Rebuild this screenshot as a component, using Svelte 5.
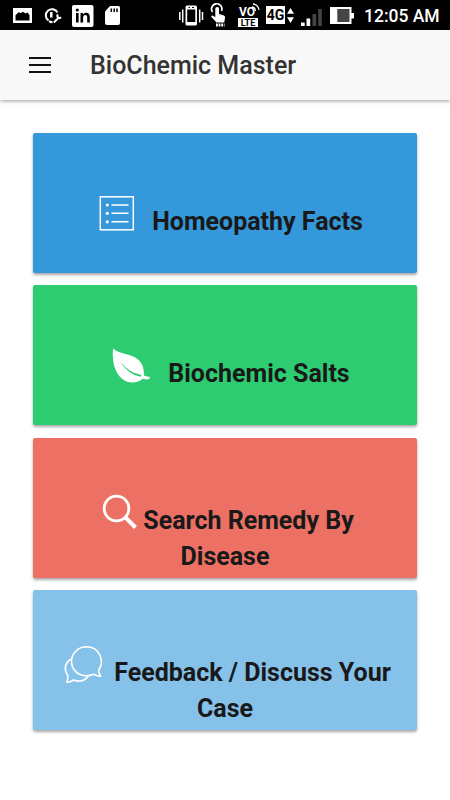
<script lang="ts">
    interface Card {
        icon: string;
        color: string;
        iconWidth: number;
        lines: string[];
    }

    const cards: Card[] = [
        { icon: 'list', color: 'blue', iconWidth: 63, lines: ['Homeopathy Facts'] },
        { icon: 'leaf', color: 'green', iconWidth: 66, lines: ['Biochemic Salts'] },
        { icon: 'search', color: 'red', iconWidth: 45, lines: ['Search Remedy By', 'Disease'] },
        { icon: 'chat', color: 'sky', iconWidth: 53, lines: ['Feedback / Discuss Your', 'Case'] }
    ];
</script>

<div class="status-bar">
    <svg class="photo" width="20" height="30" viewBox="0 0 20 30">
        <path fill="#fff" fill-rule="evenodd" d="M0 8h19v15H0zM2.500 20.500h14V15l-2-2.500-2 1-2.500-1.700-2 1.200-2.500-.8-3 3z" />
    </svg>
    <svg class="tool" width="18" height="30" viewBox="0 0 18 30">
        <path d="M4.500 20.500A6.200 6.200 0 1 1 13.500 12.500M5 21.200q1.500 1 3.500 1" fill="none" stroke="#fff" stroke-width="2" />
        <path d="M7.300 12v5.500" stroke="#fff" stroke-width="2.500" />
        <path d="M9.800 22.500l4-4M14 14.500a2 2 0 1 0 3 2.800" fill="none" stroke="#fff" stroke-width="2" />
    </svg>
    <svg class="linkedin" width="22" height="30" viewBox="0 0 22 30">
        <rect y="5" width="21.500" height="22" rx="2" fill="#fff" />
        <path fill="#000" d="M4 13h2.600v9.500H4zM8.500 13H11v1.300c.8-1.100 1.900-1.600 3.200-1.600 2.600 0 3.600 1.600 3.600 4.300v5.500h-2.600v-5c0-1.600-.4-2.600-1.800-2.600-1.600 0-2.300 1.100-2.300 2.800v4.800H8.500z" />
        <circle cx="5.300" cy="10" r="1.600" fill="#000" />
    </svg>
    <svg class="sd" width="16" height="30" viewBox="0 0 16 30">
        <path fill="#fff" d="M5 6h8.500q1.500 0 1.500 1.500v15.500q0 2-2 2H2q-2 0-2-2V11.500z" />
        <path stroke="#000" stroke-width="1.500" d="M6.300 8.500V12M9.200 8.500V12M12 8.500V12" />
    </svg>
    <span class="spacer"></span>
    <svg class="vibrate" width="25" height="30" viewBox="0 0 25 30">
        <path fill="#fff" fill-rule="evenodd" d="M8 5.500h8.500q1.500 0 1.500 1.500v17q0 1.500-1.500 1.500H8q-1.500 0-1.500-1.500V7q0-1.500 1.500-1.500zM8.200 9.500v12.500h8.100V9.500z" />
        <path stroke="#000" d="M9.500 7.500h1.500M13 7.500h2" />
        <path stroke="#fff" stroke-width="1.500" d="M.8 12v8M3.700 9.500v13M20.700 9.500v13M23.500 12v8" />
    </svg>
    <svg class="touch" width="18" height="30" viewBox="0 0 18 30">
        <path d="M2.500 12A5.200 5.200 0 1 1 11.500 11" fill="none" stroke="#fff" stroke-width="1.700" />
        <path fill="#fff" d="M5.300 8q1.900-2 3.700 0v6l5 1.500q1.300.7 1 2.500l-.8 4.500H6.500l-5.500-6q1-1.700 3-.3l1.300 1z" />
        <path d="M6 25h8.500" stroke="#fff" stroke-width="3" stroke-dasharray="1.800 .8" />
    </svg>
    <div class="volte">
        <span class="vo">VO</span>
        <span class="lte">LTE</span>
        <svg class="waves" width="8" height="9" viewBox="0 0 8 9">
            <path d="M0 4q3 0 3.500 4M1 1q5 .5 6 6" fill="none" stroke="#fff" stroke-width="1.300" />
        </svg>
    </div>
    <span class="network">4G</span>
    <svg class="arrows" width="8" height="30" viewBox="0 0 8 30">
        <path fill="#fff" d="M0 13.800L3.500 8l3.500 5.800zM0 17.200h7l-3.500 5.800z" />
    </svg>
    <svg class="signal" width="22" height="30" viewBox="0 0 22 30">
        <path fill="#fff" d="M0 22.500h3.700V26H0zM5.500 18.500h3.700V26H5.500z" />
        <path fill="#444" d="M11.500 14h3.700v12h-3.700zM17.200 9h3.600v17h-3.600z" />
    </svg>
    <svg class="battery" width="25" height="30" viewBox="0 0 25 30">
        <path fill="#fff" d="M0 7h21.500v6H24v5.500h-2.500V24H0z" />
        <path fill="#454545" d="M7.300 9H19.500v13H7.300z" />
    </svg>
    <span class="time">12:05 AM</span>
</div>

<header>
    <button class="menu" aria-label="Menu">
        <span></span>
        <span></span>
        <span></span>
    </button>
    <h1>BioChemic Master</h1>
</header>

<main>
    {#each cards as card}
        <div class="card {card.color}" class:tall={card.lines.length > 1}>
            {#each card.lines as line, i}
                <div class="line">
                    {#if i === 0}
                        <svg class="icon" width={card.iconWidth} height="44">
                            {#if card.icon === 'list'}
                                <g fill="none" stroke="#fff">
                                    <rect x="11.300" y="4.800" width="33" height="33" stroke-width="1.500" />
                                    <path d="M22.500 13h17M22.500 21.300h17M22.500 29.800h17" stroke-width="1.600" />
                                </g>
                                <g fill="#fff">
                                    <circle cx="18.300" cy="13" r="1.600" />
                                    <circle cx="18.300" cy="21.300" r="1.600" />
                                    <circle cx="18.300" cy="29.800" r="1.600" />
                                </g>
                            {:else if card.icon === 'leaf'}
                                <path fill="#fff" d="M11 4.500C18 10.500 29 9.500 36 15.500C40.500 19.500 42.300 25 42 31.500Q45 33 47.500 32.500V35Q44.500 36 41 34.500C36 39 27 40 21 35.500C12 28.500 10 16.500 11 4.500z" />
                                <path fill="#2ecc71" d="M18 17.500Q27 29 39.500 31L38.500 32.800Q25.500 30 18 17.500z" />
                            {:else if card.icon === 'search'}
                                <circle cx="18.500" cy="17.500" r="12.300" fill="none" stroke="#fff" stroke-width="2.800" />
                                <path d="M27.500 26.500l10 10" stroke="#fff" stroke-width="4" />
                            {:else}
                                <g fill="none" stroke="#fff" stroke-width="1.600" stroke-linejoin="round" transform="translate(-1.800 -.5)">
                                    <path d="M27 4.300A15 14.500 0 0 0 12.300 19C12.300 27 19 33.200 27 33.200Q31 33.200 34.500 31.700Q37.500 34 41.500 33.600Q39.500 31 39.500 27.500C45.500 19 41 4.300 27 4.300z" />
                                    <path d="M11.800 16.500C5.500 20.500 4.500 27 8.500 33Q9 37 7.700 39.700Q11.500 39.500 14.500 37.500C20 39.800 26 38.500 29 33.500" />
                                </g>
                            {/if}
                        </svg>
                    {/if}
                    <span>{line}</span>
                </div>
            {/each}
        </div>
    {/each}
</main>

<style>
    :global(body) {
        background: #fff;
        font-family: Roboto, sans-serif;
    }

    svg {
        display: block;
        flex: none;
    }

    .status-bar {
        display: flex;
        box-sizing: border-box;
        height: 30px;
        padding: 0 0 0 13px;
        background: #000;
        color: #fff;
        overflow: hidden;
    }

    .tool {
        margin-left: 11px;
    }

    .linkedin {
        margin-left: 10px;
    }

    .sd {
        margin-left: 11px;
    }

    .spacer {
        width: 58px;
        flex: none;
    }

    .touch {
        margin-left: 6px;
    }

    .volte {
        position: relative;
        flex: none;
        width: 22px;
        margin-left: 10px;
        padding-top: 5px;
        font-weight: bold;
        text-align: center;
    }

    .vo {
        display: block;
        height: 13px;
        padding-left: 1px;
        font-size: 12px;
        line-height: 14px;
        text-align: left;
    }

    .lte {
        display: block;
        width: 20px;
        height: 9px;
        background: #fff;
        color: #000;
        font-size: 9px;
        line-height: 10px;
    }

    .waves {
        position: absolute;
        top: 3px;
        right: 0;
    }

    .network {
        flex: none;
        width: 19px;
        height: 18px;
        margin: 6px 0 0 6px;
        background: #fff;
        color: #000;
        font-size: 14px;
        font-weight: bold;
        line-height: 19px;
        text-align: center;
    }

    .arrows {
        margin-left: 2px;
    }

    .signal {
        margin-left: 6px;
    }

    .battery {
        margin-left: 7px;
    }

    .time {
        margin-left: 9px;
        font-size: 17.500px;
        font-weight: 500;
        line-height: 33px;
        white-space: nowrap;
    }

    header {
        display: flex;
        align-items: center;
        height: 70px;
        background: #f8f8f8;
        box-shadow: 0 1px 4px rgba(0, 0, 0, 0.4);
    }

    .menu {
        display: flex;
        flex-direction: column;
        gap: 5px;
        width: 22px;
        margin: 0 39px 0 29px;
        padding: 0;
        border: none;
        background: none;
    }

    .menu span {
        height: 2px;
        background: #111;
    }

    h1 {
        margin: 1px 0 0;
        color: #333;
        font-size: 25px;
        font-weight: 500;
        line-height: 36px;
    }

    main {
        display: flex;
        flex-direction: column;
        gap: 12.500px;
        padding: 32.500px 33px 60px;
    }

    .card {
        box-sizing: border-box;
        height: 140px;
        padding-top: 71px;
        border-radius: 2px;
        box-shadow: 0 2px 3px rgba(0, 0, 0, 0.35);
    }

    .card.tall {
        padding-top: 65px;
    }

    .line {
        display: flex;
        justify-content: center;
        height: 36px;
        color: #191919;
        font-size: 25px;
        font-weight: 700;
        line-height: 36px;
        white-space: nowrap;
    }

    .line:first-child {
        padding-left: 2px;
    }

    .icon {
        margin-top: -12px;
    }

    .blue {
        background: #3498db;
    }

    .green {
        background: #2ecc71;
    }

    .red {
        background: #ec7063;
    }

    .sky {
        background: #85c1e9;
    }
</style>
